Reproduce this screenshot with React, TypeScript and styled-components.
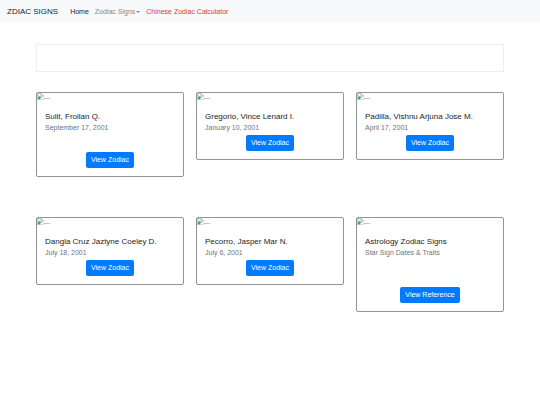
import React from 'react';
import styled, { createGlobalStyle } from 'styled-components';

const GlobalStyle = createGlobalStyle`
  *, *::before, *::after { box-sizing: border-box; }
  body {
    margin: 0;
    background: #fff;
    color: #212529;
    font-family: "Liberation Sans", Arial, sans-serif;
    font-size: 7px;
    line-height: 11px;
  }
`;

const Navbar = styled.nav`
  display: flex;
  align-items: center;
  gap: 12px;
  height: 23px;
  padding: 0 7px;
  background: #f8f9fa;
`;

const Brand = styled.a`
  color: #212529;
  font-size: 8px;
  text-decoration: none;
  white-space: nowrap;
`;

const NavList = styled.ul`
  display: flex;
  align-items: center;
  gap: 6px;
  margin: 0;
  padding: 0;
  list-style: none;
`;

const navColors = { active: '#212529', muted: '#86888a', danger: '#dc3545' };

const NavLink = styled.a<{ $tone: keyof typeof navColors }>`
  display: flex;
  align-items: center;
  gap: 1px;
  color: ${({ $tone }) => navColors[$tone]};
  text-decoration: none;
  white-space: nowrap;
`;

const Caret = styled.span`
  border-top: 2px solid currentColor;
  border-left: 2px solid transparent;
  border-right: 2px solid transparent;
`;

const Main = styled.main`
  padding: 21px 36px;
`;

const Banner = styled.div`
  height: 28px;
  margin-bottom: 20px;
  border: 1px solid #eeeff0;
`;

const CardGrid = styled.div`
  display: grid;
  grid-template-columns: repeat(3, minmax(0, 1fr));
  align-items: start;
  gap: 40px 12px;
`;

const Card = styled.article`
  overflow: hidden;
  border: 1px solid #919395;
  border-radius: 2px;
  background: #fff;
`;

const CardImage = styled.div`
  display: flex;
  align-items: flex-start;
  height: 10px;
  color: #212529;
  line-height: 8px;
`;

const CardBody = styled.div`
  display: flex;
  flex-direction: column;
  padding: 8px;
`;

const CardTitle = styled.h5`
  margin: 0;
  font-size: 8px;
  font-weight: 400;
  line-height: 11px;
`;

const CardSubtitle = styled.h6`
  margin: 0;
  color: #6c757d;
  font-size: 7px;
  font-weight: 400;
  line-height: 11px;
`;

const spaces = { none: 2, medium: 19, large: 29 };

const CardButton = styled.a<{ $space: keyof typeof spaces }>`
  align-self: center;
  margin-top: ${({ $space }) => spaces[$space]}px;
  padding: 2px 5px;
  border-radius: 2px;
  background: #007bff;
  color: #fff;
  line-height: 12px;
  text-decoration: none;
`;

function MissingPicture() {
  return (
    <svg width="7" height="7" viewBox="0 0 16 16" aria-hidden="true">
      <path d="M1 1h9l5 5v9H1z" fill="#c3d5f5" stroke="#8c9299" />
      <path d="M10 1v5h5" fill="#fff" stroke="#8c9299" />
      <circle cx="6" cy="5" r="2" fill="#fff" />
      <path d="M2 14v-2l4-5 3 3-4 4z" fill="#45a33b" />
      <path d="M7 15l8-8v8z" fill="#fff" />
    </svg>
  );
}

type CardData = {
  title: string;
  subtitle: string;
  action: string;
  space: keyof typeof spaces;
};

const cards: CardData[] = [
  { title: 'Sulit, Froilan Q.', subtitle: 'September 17, 2001', action: 'View Zodiac', space: 'medium' },
  { title: 'Gregorio, Vince Lenard I.', subtitle: 'January 10, 2001', action: 'View Zodiac', space: 'none' },
  { title: 'Padilla, Vishnu Arjuna Jose M.', subtitle: 'April 17, 2001', action: 'View Zodiac', space: 'none' },
  { title: 'Dangla Cruz Jaztyne Coeley D.', subtitle: 'July 18, 2001', action: 'View Zodiac', space: 'none' },
  { title: 'Pecorro, Jasper Mar N.', subtitle: 'July 6, 2001', action: 'View Zodiac', space: 'none' },
  { title: 'Astrology Zodiac Signs', subtitle: 'Star Sign Dates & Traits', action: 'View Reference', space: 'large' },
];

export default function App() {
  return (
    <>
      <GlobalStyle />
      <Navbar>
        <Brand href="#">ZDIAC SIGNS</Brand>
        <NavList>
          <li><NavLink href="#" $tone="active">Home</NavLink></li>
          <li><NavLink href="#" $tone="muted">Zodiac Signs<Caret /></NavLink></li>
          <li><NavLink href="#" $tone="danger">Chinese Zodiac Calculator</NavLink></li>
        </NavList>
      </Navbar>
      <Main>
        <Banner />
        <CardGrid>
          {cards.map((card) => (
            <Card key={card.title}>
              <CardImage><MissingPicture />...</CardImage>
              <CardBody>
                <CardTitle>{card.title}</CardTitle>
                <CardSubtitle>{card.subtitle}</CardSubtitle>
                <CardButton href="#" $space={card.space}>{card.action}</CardButton>
              </CardBody>
            </Card>
          ))}
        </CardGrid>
      </Main>
    </>
  );
}
